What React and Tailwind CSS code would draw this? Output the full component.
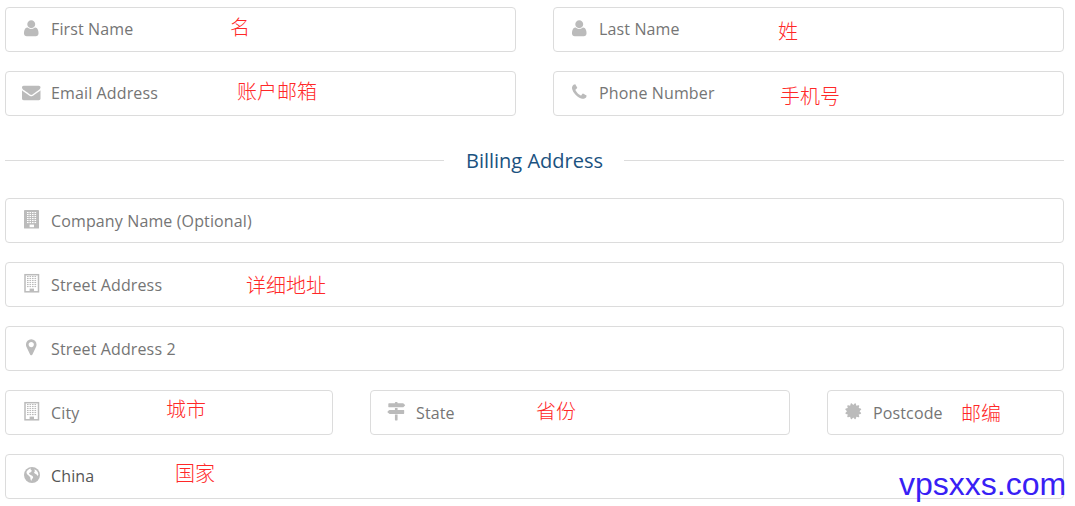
import React from 'react';

const icons = {
  user: 'M1600 1405q0 120-73 189.5t-194 69.5h-874q-121 0-194-69.5t-73-189.5q0-53 3.5-103.5t14-109 26.5-108.5 43-97.5 62-81 85.5-53.5 111.5-20q9 0 42 21.5t74.5 48 108 48 133.5 21.5 133.5-21.5 108-48 74.5-48 42-21.5q61 0 111.5 20t85.5 53.5 62 81 43 97.5 26.5 108.5 14 109 3.5 103.5zm-320-893q0 159-112.5 271.5t-271.5 112.5-271.5-112.5-112.5-271.5 112.5-271.5 271.5-112.5 271.5 112.5 112.5 271.5z',
  envelope: 'M1792 710v794q0 66-47 113t-113 47h-1472q-66 0-113-47t-47-113v-794q44 49 101 87 362 246 497 345 57 42 92.5 65.5t94.5 48 110 24.5h2q51 0 110-24.5t94.5-48 92.5-65.5q170-123 498-345 57-39 100-87zm0-294q0 79-49 151t-122 123q-376 261-468 325-10 7-42.5 31t-54 38.5-52 32.5-57.5 27-50 9h-2q-23 0-50-9t-57.5-27-52-32.5-54-38.5-42.5-31q-91-64-262-182.5t-205-142.5q-62-42-117-115.5t-55-136.5q0-78 41.5-130t118.5-52h1472q65 0 112.5 47t47.5 113z',
  phone: 'M1600 1240q0 27-10 70.5t-21 68.5q-21 50-122 106-94 51-186 51-27 0-53-3.5t-57.5-12.5-47-14.5-55.5-20.5-49-18q-98-35-175-83-127-79-264-216t-216-264q-48-77-83-175-3-9-18-49t-20.5-55.5-14.5-47-12.5-57.5-3.5-53q0-92 51-186 56-101 106-122 25-11 68.5-21t70.5-10q14 0 21 3 18 6 53 76 11 19 30 54t35 63.5 31 53.5q3 4 17.5 25t21.5 35.5 7 28.5q0 20-28.5 50t-62 55-62 53-28.5 46q0 9 5 22.5t8.5 20.5 14 24 11.5 19q76 137 174 235t235 174q2 1 19 11.5t24 14 20.5 8.5 22.5 5q18 0 46-28.5t53-62 55-62 50-28.5q14 0 28.5 7t35.5 21.5 25 17.5q25 15 53.5 31t63.5 35 54 30q70 35 76 53 3 7 3 21z',
  marker: 'M1152 640q0-106-75-181t-181-75-181 75-75 181 75 181 181 75 181-75 75-181zm256 0q0 109-33 179l-364 774q-16 33-47.5 52t-67.5 19-67.5-19-46.5-52l-365-774q-33-70-33-179 0-212 150-362t362-150 362 150 150 362z',
  signs: 'M1745 297q10 10 10 23t-10 23l-141 141q-28 28-68 28h-1344q-26 0-45-19t-19-45v-256q0-26 19-45t45-19h576v-64q0-26 19-45t45-19h128q26 0 45 19t19 45v64h512q40 0 68 28zm-977 919h256v512q0 26-19 45t-45 19h-128q-26 0-45-19t-19-45v-512zm832-448q26 0 45 19t19 45v256q0 26-19 45t-45 19h-1344q-40 0-68-28l-141-141q-10-10-10-23t10-23l141-141q28-28 68-28h512v-192h256v192h576z',
  certificate: 'M1504 896l138 135q30 28 20 70-12 41-52 51l-188 48 53 186q12 41-19 70-29 31-70 19l-186-53-48 188q-10 40-51 52-12 2-19 2-31 0-51-22l-135-138-135 138q-28 30-70 20-41-11-51-52l-48-188-186 53q-41 12-70-19-31-29-19-70l53-186-188-48q-40-10-52-51-10-42 20-70l138-135-138-135q-30-28-20-70 12-41 52-51l188-48-53-186q-12-41 19-70 29-31 70-19l186 53 48-188q10-41 51-51 41-12 70 19l135 139 135-139q29-30 70-19 41 10 51 51l48 188 186-53q41-12 70 19 31 29 19 70l-53 186 188 48q40 10 52 51 10 42-20 70z',
};

const Glyph = ({ name }) => (
  <svg viewBox="0 0 1792 1792" className="size-[18.5px] shrink-0" fill="currentColor">
    <path d={icons[name]} />
  </svg>
);

const windowRows = [3, 5, 7, 9, 11, 13];
const windowCols = [4, 6.5, 9, 11.5];

const Building = ({ solid }) => (
  <svg viewBox="0 0 18 20" className="w-[18px] h-5 shrink-0">
    {solid ? (
      <rect x="1" y="1" width="15" height="18.6" rx="0.7" fill="currentColor" />
    ) : (
      <rect x="2" y="1.7" width="13.5" height="17.1" fill="none" stroke="currentColor" strokeWidth="1.5" />
    )}
    {windowRows.map((y) =>
      windowCols.map((x) => (
        <rect key={`${x}-${y}`} x={x} y={y} width="1.6" height="1.1" fill={solid ? '#fff' : 'currentColor'} />
      ))
    )}
    <rect x="6.6" y="15.6" width="4.4" height="2.6" fill={solid ? '#fff' : 'currentColor'} />
  </svg>
);

const Globe = () => (
  <svg viewBox="0 0 16 16" className="size-4 shrink-0" fill="currentColor">
    <circle cx="8" cy="8" r="8" />
    <path
      d="M5.2 2 7 1.5 6.6 2.8 8 3.8 6.8 5.2 5.4 5.8 4.9 6.8 6.2 7.8 8.6 9 9.2 10.4 7.8 12.4 7.2 14 6.5 12.2 6.3 10.2 4.6 8.4 2.9 7 2.4 5 3.4 3.4ZM10 2.4 12 3 13.7 5 14.4 7.6 13.7 9 12.6 7.4 10.8 6.6 10 5.4 11 4Z"
      fill="#fff"
    />
  </svg>
);

const Field = ({ icon, label, note, noteClass, labelClass = 'text-[#757575]', className = '' }) => (
  <div className={`relative flex items-center h-[45px] rounded-[4px] border border-[#dcdcdc] bg-white ${className}`}>
    <span className="ml-[16.5px] w-[18px] h-5 mb-[2.5px] flex items-center justify-center text-[#bbb]">{icon}</span>
    <span className={`ml-[10.5px] text-base leading-6 tracking-[0.13px] whitespace-nowrap ${labelClass}`}>{label}</span>
    {note && (
      <span
        className={`absolute text-[20px] leading-5 whitespace-nowrap font-light text-[#ff2828] font-['Noto_Sans_CJK_SC',sans-serif] ${noteClass}`}
      >
        {note}
      </span>
    )}
  </div>
);

export default function App() {
  return (
    <div className="relative w-[1075px] h-[506px] overflow-hidden bg-white pl-[5px] pr-[11px] pt-[7px] font-['Open_Sans',sans-serif]">
      <div className="grid grid-cols-2 gap-x-[37px] gap-y-[19px]">
        <Field icon={<Glyph name="user" />} label="First Name" labelClass="text-[#757575] mb-[2px]" note="名" noteClass="left-[224px] top-[9px]" />
        <Field icon={<Glyph name="user" />} label="Last Name" labelClass="text-[#757575] mb-[2px]" note="姓" noteClass="left-[224px] top-[13px]" />
        <Field icon={<Glyph name="envelope" />} label="Email Address" labelClass="text-[#757575] mb-[2px]" note="账户邮箱" noteClass="left-[231px] top-[9px]" />
        <Field icon={<Glyph name="phone" />} label="Phone Number" labelClass="text-[#757575] mb-[2px]" note="手机号" noteClass="left-[226px] top-[14px]" />
      </div>

      <div className="flex items-center h-[82px] pt-[7px]">
        <div className="h-px w-[439px] bg-[#dcdcdc]" />
        <h2 className="w-[180px] pl-px text-center text-[20px] leading-7 text-[#1a5280]">Billing Address</h2>
        <div className="h-px flex-1 bg-[#dcdcdc]" />
      </div>

      <div className="flex flex-col gap-[19px]">
        <Field icon={<Building solid />} label="Company Name (Optional)" />
        <Field icon={<Building />} label="Street Address" note="详细地址" noteClass="left-[240px] top-[12px]" />
        <Field icon={<Glyph name="marker" />} label="Street Address 2" />
        <div className="flex gap-[37px]">
          <Field icon={<Building />} label="City" note="城市" noteClass="left-[160px] top-[8px]" className="w-[328px]" />
          <Field icon={<Glyph name="signs" />} label="State" note="省份" noteClass="left-[165px] top-[10px]" className="w-[420px]" />
          <Field icon={<Glyph name="certificate" />} label="Postcode" note="邮编" noteClass="left-[133px] top-[12px]" className="w-[237px]" />
        </div>
        <Field icon={<Globe />} label="China" labelClass="text-[#555] mb-[2px]" note="国家" noteClass="left-[169px] top-[8px]" />
      </div>

      <div className="absolute left-[899px] top-[466px] text-[32px] leading-9 text-[#3820f5] font-['Liberation_Sans',sans-serif]">
        vpsxxs.com
      </div>
    </div>
  );
}
